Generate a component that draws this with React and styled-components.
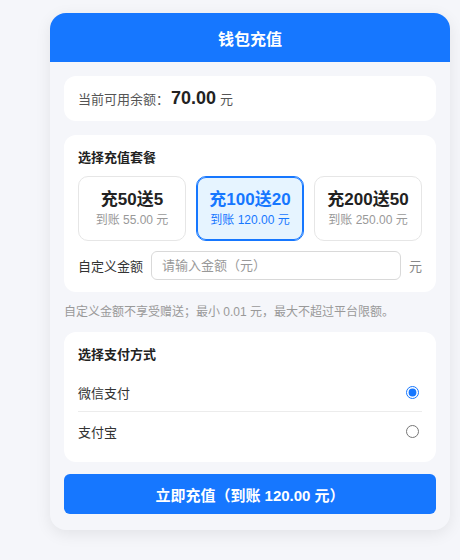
import React, { useState } from "react";
import styled, { createGlobalStyle } from "styled-components";

const packages = [
  { pay: 50, gift: 5 },
  { pay: 100, gift: 20 },
  { pay: 200, gift: 50 },
];

const methods = [
  { id: "wechat", name: "微信支付" },
  { id: "alipay", name: "支付宝" },
];

export default function App() {
  const [selected, setSelected] = useState(1);
  const [method, setMethod] = useState("wechat");
  const [custom, setCustom] = useState("");

  const total = (packages[selected].pay + packages[selected].gift).toFixed(2);

  return (
    <>
      <GlobalStyle />
      <Page>
        <Card>
          <Header>钱包充值</Header>
          <Body>
            <BalanceBox>
              <Muted>当前可用余额：</Muted>
              <Amount>70.00</Amount>
              <Muted>元</Muted>
            </BalanceBox>

            <Section>
              <SectionTitle>选择充值套餐</SectionTitle>
              <PackageGrid>
                {packages.map((p, i) => (
                  <Package key={p.pay} $active={i === selected} onClick={() => setSelected(i)}>
                    <PackageTitle>充{p.pay}送{p.gift}</PackageTitle>
                    <PackageSub $active={i === selected}>
                      到账 {(p.pay + p.gift).toFixed(2)} 元
                    </PackageSub>
                  </Package>
                ))}
              </PackageGrid>
              <CustomRow>
                <Label>自定义金额</Label>
                <AmountInput
                  placeholder="请输入金额（元）"
                  value={custom}
                  onChange={(e) => setCustom(e.target.value)}
                />
                <Unit>元</Unit>
              </CustomRow>
            </Section>

            <Hint>自定义金额不享受赠送；最小 0.01 元，最大不超过平台限额。</Hint>

            <Section>
              <SectionTitle>选择支付方式</SectionTitle>
              {methods.map((m) => (
                <MethodRow key={m.id}>
                  <span>{m.name}</span>
                  <Radio
                    type="radio"
                    name="method"
                    checked={method === m.id}
                    onChange={() => setMethod(m.id)}
                  />
                </MethodRow>
              ))}
            </Section>

            <SubmitButton>立即充值（到账 {total} 元）</SubmitButton>
          </Body>
        </Card>
      </Page>
    </>
  );
}

// Styling

const GlobalStyle = createGlobalStyle`
  body {
    margin: 0;
    background: #f5f6fa;
    font-family: "Liberation Sans", "Noto Sans CJK SC", sans-serif;
    color: #333;
  }
`;

const Page = styled.div`
  padding: 13px 10px 30px 50px;
`;

const Card = styled.div`
  width: 400px;
  border-radius: 16px;
  overflow: hidden;
  background: #f5f6fa;
  box-shadow: 0 4px 16px rgba(0, 0, 0, 0.08);
`;

const Header = styled.div`
  height: 49px;
  display: flex;
  align-items: center;
  justify-content: center;
  background: #1677ff;
  color: #fff;
  font-size: 16px;
  font-weight: 700;
`;

const Body = styled.div`
  display: flex;
  flex-direction: column;
  gap: 14px;
  padding: 14px 14px 16px;
`;

const Section = styled.div`
  background: #fff;
  border-radius: 12px;
  padding: 14px 14px 12px;
`;

const BalanceBox = styled.div`
  background: #fff;
  border-radius: 12px;
  height: 45px;
  padding: 0 14px;
  display: flex;
  align-items: center;
  box-sizing: border-box;
  font-size: 13px;
`;

const Muted = styled.span`
  color: #555;
`;

const Amount = styled.span`
  font-size: 18px;
  font-weight: 700;
  color: #222;
  margin: 0 4px 0 2px;
`;

const SectionTitle = styled.div`
  font-size: 13px;
  font-weight: 700;
  color: #222;
  line-height: 17px;
  margin-bottom: 10px;
`;

const PackageGrid = styled.div`
  display: grid;
  grid-template-columns: repeat(3, 1fr);
  gap: 10px;
`;

const Package = styled.div`
  height: 65px;
  box-sizing: border-box;
  border-radius: 10px;
  border: 1px solid ${(p) => (p.$active ? "#1677ff" : "#e6e6e6")};
  box-shadow: ${(p) => (p.$active ? "inset 0 0 0 1px #1677ff" : "none")};
  background: ${(p) => (p.$active ? "#e6f4ff" : "#fff")};
  color: ${(p) => (p.$active ? "#1677ff" : "#222")};
  display: flex;
  flex-direction: column;
  align-items: center;
  justify-content: center;
  cursor: pointer;
`;

const PackageTitle = styled.div`
  font-size: 17px;
  font-weight: 700;
  line-height: 21px;
`;

const PackageSub = styled.div`
  font-size: 12px;
  line-height: 17px;
  margin-top: 2px;
  color: ${(p) => (p.$active ? "#1677ff" : "#999")};
`;

const CustomRow = styled.div`
  display: flex;
  align-items: center;
  gap: 8px;
  margin-top: 10px;
`;

const Label = styled.span`
  font-size: 13px;
  color: #333;
`;

const AmountInput = styled.input`
  flex: 1;
  height: 29px;
  box-sizing: border-box;
  border: 1px solid #d9d9d9;
  border-radius: 6px;
  padding: 0 10px;
  font: inherit;
  font-size: 13px;
  color: #333;
  outline: none;
  &::placeholder {
    color: #999;
  }
`;

const Unit = styled.span`
  font-size: 13px;
  color: #888;
`;

const Hint = styled.div`
  font-size: 12px;
  line-height: 12px;
  color: #999;
`;

const MethodRow = styled.label`
  height: 38px;
  display: flex;
  align-items: center;
  justify-content: space-between;
  font-size: 13px;
  color: #333;
  cursor: pointer;
  & + & {
    border-top: 1px solid #ececec;
  }
`;

const Radio = styled.input`
  accent-color: #1677ff;
  margin: 0 3px 0 0;
`;

const SubmitButton = styled.button`
  margin-top: -2px;
  height: 40px;
  border: none;
  border-radius: 6px;
  background: #1677ff;
  color: #fff;
  font: inherit;
  font-size: 15px;
  font-weight: 700;
  cursor: pointer;
`;
